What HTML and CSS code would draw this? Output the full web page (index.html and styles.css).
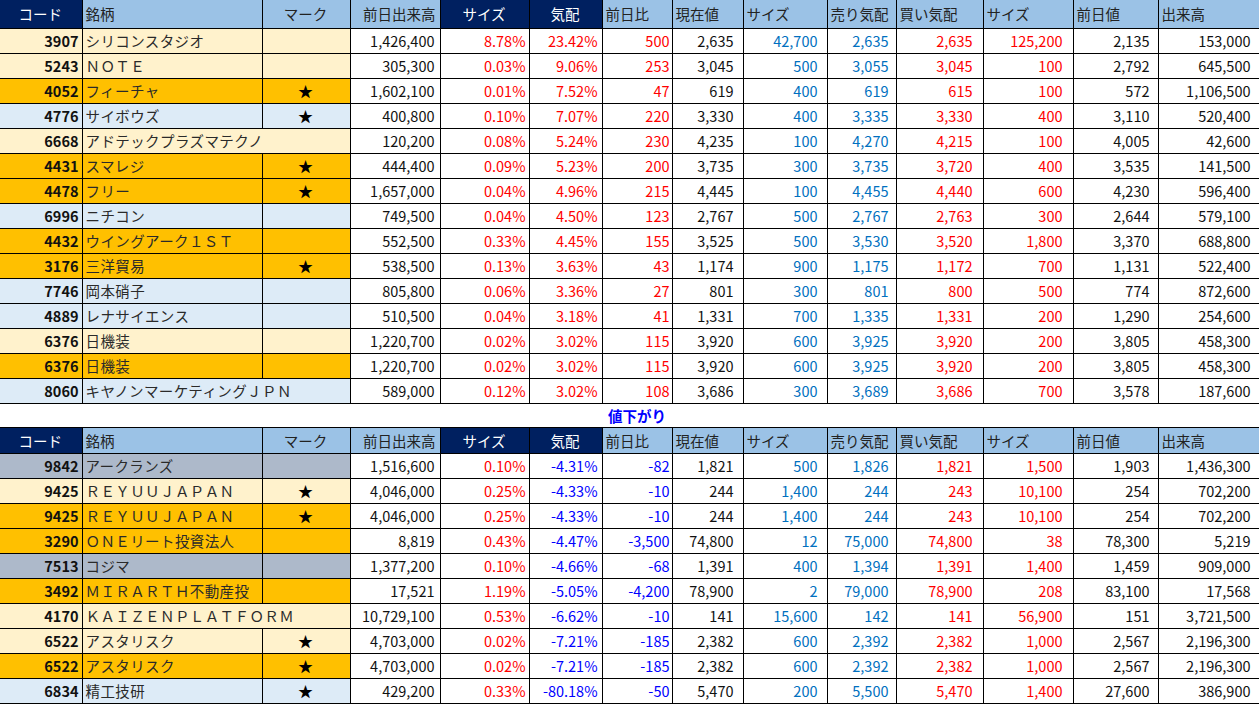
FILE: index.html
```html
<!DOCTYPE html>
<html lang="ja">
<head>
<meta charset="utf-8">
<title>値上がり・値下がり</title>
<link rel="stylesheet" href="styles.css">
</head>
<body>
<table class="sheet">
<colgroup>
<col class="w-code"><col class="w-name"><col class="w-mark"><col class="w-pvol"><col class="w-size1"><col class="w-kehai"><col class="w-chg"><col class="w-cur"><col class="w-size2"><col class="w-sell"><col class="w-buy"><col class="w-size3"><col class="w-prev"><col class="w-vol">
</colgroup>
<tbody>
<tr class="head head-first">
<th class="navy center">コード</th><th class="left">銘柄</th><th class="center">マーク</th><th class="right">前日出来高</th><th class="navy center">サイズ</th><th class="navy center">気配</th><th class="left">前日比</th><th class="left">現在値</th><th class="left">サイズ</th><th class="left">売り気配</th><th class="left">買い気配</th><th class="left">サイズ</th><th class="left">前日値</th><th class="left">出来高</th>
</tr>
<tr class="ly"><td class="code">3907</td><td class="name">シリコンスタジオ</td><td class="mark"></td><td>1,426,400</td><td class="red">8.78%</td><td class="red">23.42%</td><td class="red">500</td><td>2,635</td><td class="sky">42,700</td><td class="sky">2,635</td><td class="red">2,635</td><td class="red">125,200</td><td>2,135</td><td>153,000</td></tr>
<tr class="ly"><td class="code">5243</td><td class="name">ＮＯＴＥ</td><td class="mark"></td><td>305,300</td><td class="red">0.03%</td><td class="red">9.06%</td><td class="red">253</td><td>3,045</td><td class="sky">500</td><td class="sky">3,055</td><td class="red">3,045</td><td class="red">100</td><td>2,792</td><td>645,500</td></tr>
<tr class="or"><td class="code">4052</td><td class="name">フィーチャ</td><td class="mark">★</td><td>1,602,100</td><td class="red">0.01%</td><td class="red">7.52%</td><td class="red">47</td><td>619</td><td class="sky">400</td><td class="sky">619</td><td class="red">615</td><td class="red">100</td><td>572</td><td>1,106,500</td></tr>
<tr class="lb"><td class="code">4776</td><td class="name">サイボウズ</td><td class="mark">★</td><td>400,800</td><td class="red">0.10%</td><td class="red">7.07%</td><td class="red">220</td><td>3,330</td><td class="sky">400</td><td class="sky">3,335</td><td class="red">3,330</td><td class="red">400</td><td>3,110</td><td>520,400</td></tr>
<tr class="ly"><td class="code">6668</td><td class="name" colspan="2">アドテックプラズマテクノ</td><td>120,200</td><td class="red">0.08%</td><td class="red">5.24%</td><td class="red">230</td><td>4,235</td><td class="sky">100</td><td class="sky">4,270</td><td class="red">4,215</td><td class="red">100</td><td>4,005</td><td>42,600</td></tr>
<tr class="or"><td class="code">4431</td><td class="name">スマレジ</td><td class="mark">★</td><td>444,400</td><td class="red">0.09%</td><td class="red">5.23%</td><td class="red">200</td><td>3,735</td><td class="sky">300</td><td class="sky">3,735</td><td class="red">3,720</td><td class="red">400</td><td>3,535</td><td>141,500</td></tr>
<tr class="or"><td class="code">4478</td><td class="name">フリー</td><td class="mark">★</td><td>1,657,000</td><td class="red">0.04%</td><td class="red">4.96%</td><td class="red">215</td><td>4,445</td><td class="sky">100</td><td class="sky">4,455</td><td class="red">4,440</td><td class="red">600</td><td>4,230</td><td>596,400</td></tr>
<tr class="lb"><td class="code">6996</td><td class="name">ニチコン</td><td class="mark"></td><td>749,500</td><td class="red">0.04%</td><td class="red">4.50%</td><td class="red">123</td><td>2,767</td><td class="sky">500</td><td class="sky">2,767</td><td class="red">2,763</td><td class="red">300</td><td>2,644</td><td>579,100</td></tr>
<tr class="or"><td class="code">4432</td><td class="name">ウイングアーク１ＳＴ</td><td class="mark"></td><td>552,500</td><td class="red">0.33%</td><td class="red">4.45%</td><td class="red">155</td><td>3,525</td><td class="sky">500</td><td class="sky">3,530</td><td class="red">3,520</td><td class="red">1,800</td><td>3,370</td><td>688,800</td></tr>
<tr class="or"><td class="code">3176</td><td class="name">三洋貿易</td><td class="mark">★</td><td>538,500</td><td class="red">0.13%</td><td class="red">3.63%</td><td class="red">43</td><td>1,174</td><td class="sky">900</td><td class="sky">1,175</td><td class="red">1,172</td><td class="red">700</td><td>1,131</td><td>522,400</td></tr>
<tr class="lb"><td class="code">7746</td><td class="name">岡本硝子</td><td class="mark"></td><td>805,800</td><td class="red">0.06%</td><td class="red">3.36%</td><td class="red">27</td><td>801</td><td class="sky">300</td><td class="sky">801</td><td class="red">800</td><td class="red">500</td><td>774</td><td>872,600</td></tr>
<tr class="lb"><td class="code">4889</td><td class="name">レナサイエンス</td><td class="mark"></td><td>510,500</td><td class="red">0.04%</td><td class="red">3.18%</td><td class="red">41</td><td>1,331</td><td class="sky">700</td><td class="sky">1,335</td><td class="red">1,331</td><td class="red">200</td><td>1,290</td><td>254,600</td></tr>
<tr class="ly"><td class="code">6376</td><td class="name">日機装</td><td class="mark"></td><td>1,220,700</td><td class="red">0.02%</td><td class="red">3.02%</td><td class="red">115</td><td>3,920</td><td class="sky">600</td><td class="sky">3,925</td><td class="red">3,920</td><td class="red">200</td><td>3,805</td><td>458,300</td></tr>
<tr class="or"><td class="code">6376</td><td class="name">日機装</td><td class="mark"></td><td>1,220,700</td><td class="red">0.02%</td><td class="red">3.02%</td><td class="red">115</td><td>3,920</td><td class="sky">600</td><td class="sky">3,925</td><td class="red">3,920</td><td class="red">200</td><td>3,805</td><td>458,300</td></tr>
<tr class="lb"><td class="code">8060</td><td class="name" colspan="2">キヤノンマーケティングＪＰＮ</td><td>589,000</td><td class="red">0.12%</td><td class="red">3.02%</td><td class="red">108</td><td>3,686</td><td class="sky">300</td><td class="sky">3,689</td><td class="red">3,686</td><td class="red">700</td><td>3,578</td><td>187,600</td></tr>
<tr class="gap"><td colspan="6"></td><td class="caption">値下がり</td><td colspan="7"></td></tr>
<tr class="head">
<th class="navy center">コード</th><th class="left">銘柄</th><th class="center">マーク</th><th class="right">前日出来高</th><th class="navy center">サイズ</th><th class="navy center">気配</th><th class="left">前日比</th><th class="left">現在値</th><th class="left">サイズ</th><th class="left">売り気配</th><th class="left">買い気配</th><th class="left">サイズ</th><th class="left">前日値</th><th class="left">出来高</th>
</tr>
<tr class="gb"><td class="code">9842</td><td class="name">アークランズ</td><td class="mark"></td><td>1,516,600</td><td class="red">0.10%</td><td class="blue">-4.31%</td><td class="blue">-82</td><td>1,821</td><td class="sky">500</td><td class="sky">1,826</td><td class="red">1,821</td><td class="red">1,500</td><td>1,903</td><td>1,436,300</td></tr>
<tr class="ly"><td class="code">9425</td><td class="name">ＲＥＹＵＵＪＡＰＡＮ</td><td class="mark">★</td><td>4,046,000</td><td class="red">0.25%</td><td class="blue">-4.33%</td><td class="blue">-10</td><td>244</td><td class="sky">1,400</td><td class="sky">244</td><td class="red">243</td><td class="red">10,100</td><td>254</td><td>702,200</td></tr>
<tr class="or"><td class="code">9425</td><td class="name">ＲＥＹＵＵＪＡＰＡＮ</td><td class="mark">★</td><td>4,046,000</td><td class="red">0.25%</td><td class="blue">-4.33%</td><td class="blue">-10</td><td>244</td><td class="sky">1,400</td><td class="sky">244</td><td class="red">243</td><td class="red">10,100</td><td>254</td><td>702,200</td></tr>
<tr class="or"><td class="code">3290</td><td class="name">ＯＮＥリート投資法人</td><td class="mark"></td><td>8,819</td><td class="red">0.43%</td><td class="blue">-4.47%</td><td class="blue">-3,500</td><td>74,800</td><td class="sky">12</td><td class="sky">75,000</td><td class="red">74,800</td><td class="red">38</td><td>78,300</td><td>5,219</td></tr>
<tr class="gb"><td class="code">7513</td><td class="name">コジマ</td><td class="mark"></td><td>1,377,200</td><td class="red">0.10%</td><td class="blue">-4.66%</td><td class="blue">-68</td><td>1,391</td><td class="sky">400</td><td class="sky">1,394</td><td class="red">1,391</td><td class="red">1,400</td><td>1,459</td><td>909,000</td></tr>
<tr class="or"><td class="code">3492</td><td class="name">ＭＩＲＡＲＴＨ不動産投</td><td class="mark"></td><td>17,521</td><td class="red">1.19%</td><td class="blue">-5.05%</td><td class="blue">-4,200</td><td>78,900</td><td class="sky">2</td><td class="sky">79,000</td><td class="red">78,900</td><td class="red">208</td><td>83,100</td><td>17,568</td></tr>
<tr class="ly"><td class="code">4170</td><td class="name" colspan="2">ＫＡＩＺＥＮＰＬＡＴＦＯＲＭ</td><td>10,729,100</td><td class="red">0.53%</td><td class="blue">-6.62%</td><td class="blue">-10</td><td>141</td><td class="sky">15,600</td><td class="sky">142</td><td class="red">141</td><td class="red">56,900</td><td>151</td><td>3,721,500</td></tr>
<tr class="ly"><td class="code">6522</td><td class="name">アスタリスク</td><td class="mark">★</td><td>4,703,000</td><td class="red">0.02%</td><td class="blue">-7.21%</td><td class="blue">-185</td><td>2,382</td><td class="sky">600</td><td class="sky">2,392</td><td class="red">2,382</td><td class="red">1,000</td><td>2,567</td><td>2,196,300</td></tr>
<tr class="or"><td class="code">6522</td><td class="name">アスタリスク</td><td class="mark">★</td><td>4,703,000</td><td class="red">0.02%</td><td class="blue">-7.21%</td><td class="blue">-185</td><td>2,382</td><td class="sky">600</td><td class="sky">2,392</td><td class="red">2,382</td><td class="red">1,000</td><td>2,567</td><td>2,196,300</td></tr>
<tr class="lb"><td class="code">6834</td><td class="name">精工技研</td><td class="mark">★</td><td>429,200</td><td class="red">0.33%</td><td class="blue">-80.18%</td><td class="blue">-50</td><td>5,470</td><td class="sky">200</td><td class="sky">5,500</td><td class="red">5,470</td><td class="red">1,400</td><td>27,600</td><td>386,900</td></tr>
</tbody>
</table>
</body>
</html>
```

FILE: styles.css
```css
html, body {
  margin: 0;
  padding: 0;
  background: #ffffff;
}

body {
  font-family: "Noto Sans CJK JP", "Noto Sans", sans-serif;
  font-size: 14.5px;
  color: #111111;
  overflow: hidden;
}

.sheet {
  border-collapse: collapse;
  table-layout: fixed;
  width: 1259px;
}

.w-code { width: 82px; }
.w-name { width: 180px; }
.w-mark { width: 88px; }
.w-pvol { width: 90px; }
.w-size1 { width: 89px; }
.w-kehai { width: 73px; }
.w-chg { width: 70px; }
.w-cur { width: 71px; }
.w-size2 { width: 84px; }
.w-sell { width: 69px; }
.w-buy { width: 87px; }
.w-size3 { width: 90px; }
.w-prev { width: 85px; }
.w-vol { width: 101px; }

.sheet td,
.sheet th {
  border: 1px solid #000000;
  padding: 0 4px 0 3px;
  height: 24px;
  line-height: 20px;
  white-space: nowrap;
  overflow: hidden;
  text-align: right;
  vertical-align: middle;
  font-weight: 400;
}

.sheet tr > :first-child {
  border-left: none;
}

/* right padding of the number columns, counted from the row end */
.sheet td:nth-last-child(11) { padding-right: 5px; }
.sheet td:nth-last-child(10) { padding-right: 3px; }
.sheet td:nth-last-child(9) { padding-right: 4px; }
.sheet td:nth-last-child(8) { padding-right: 2px; }
.sheet td:nth-last-child(7) { padding-right: 9px; }
.sheet td:nth-last-child(6) { padding-right: 9px; }
.sheet td:nth-last-child(5) { padding-right: 7px; }
.sheet td:nth-last-child(4) { padding-right: 10px; }
.sheet td:nth-last-child(3) { padding-right: 10px; }
.sheet td:nth-last-child(2) { padding-right: 8px; }
.sheet td:nth-last-child(1) { padding-right: 8px; }

.head th {
  background: #9bc2e6;
  color: #222222;
  height: 25px;
}

.head-first th {
  border-top: none;
  height: 28px;
}

.head th.navy {
  background: #002060;
  color: #ffffff;
}

.head th.left { text-align: left; }
.head th.center { text-align: center; }
.head th.right { text-align: right; }

.sheet td.code {
  font-weight: 700;
  color: #111111;
  padding-right: 3px;
}

.sheet td.name {
  text-align: left;
  color: #2a2a2a;
  letter-spacing: 0.4px;
}

.sheet td.mark {
  text-align: center;
  color: #000000;
  font-size: 15px;
}

.ly .code, .ly .name, .ly .mark { background: #fff2cc; }
.or .code, .or .name, .or .mark { background: #ffc000; }
.lb .code, .lb .name, .lb .mark { background: #ddebf7; }
.gb .code, .gb .name, .gb .mark { background: #adb9ca; }

.red { color: #ff0000; }
.blue { color: #0000ff; }
.sky { color: #0070c0; }

.gap td {
  border-left: none;
  border-right: none;
  height: 23px;
}

.gap td.caption {
  text-align: center;
  color: #0000ff;
  font-weight: 700;
  padding: 0;
}
```
